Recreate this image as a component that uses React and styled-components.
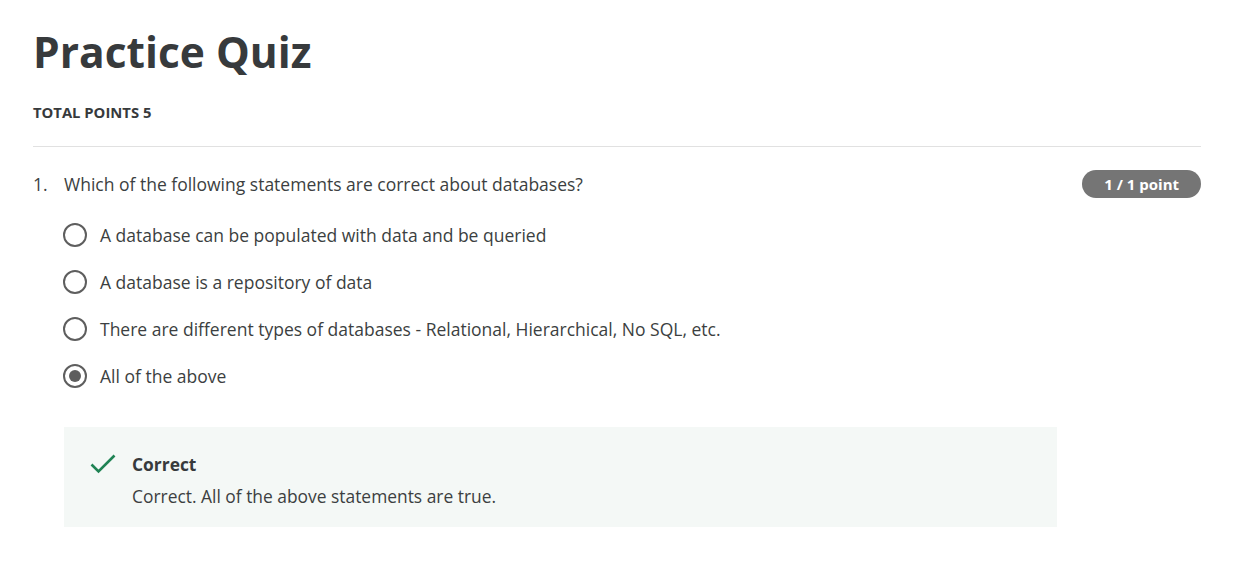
import React from "react";
import styled, { createGlobalStyle } from "styled-components";

const GlobalStyle = createGlobalStyle`
  body {
    margin: 0;
    background: #fff;
    font-family: "Open Sans", "Liberation Sans", sans-serif;
    color: #3c3f41;
  }
`;

const options = [
  "A database can be populated with data and be queried",
  "A database is a repository of data",
  "There are different types of databases - Relational, Hierarchical, No SQL, etc.",
  "All of the above",
];

function App() {
  const selected = 3;
  return (
    <>
      <GlobalStyle />
      <Page>
        <Title>Practice Quiz</Title>
        <TotalPoints>TOTAL POINTS 5</TotalPoints>
        <Divider />
        <Question>
          <QuestionHead>
            <Number>1.</Number>
            <Prompt>Which of the following statements are correct about databases?</Prompt>
            <Badge>1 / 1 point</Badge>
          </QuestionHead>
          <Options>
            {options.map((text, i) => (
              <Option key={i}>
                <Radio checked={i === selected} />
                <span>{text}</span>
              </Option>
            ))}
          </Options>
          <Feedback>
            <CheckIcon viewBox="0 0 26 20">
              <path d="M1.5 10.5 L8.5 17.5 L24.5 1.5" fill="none" stroke="#1f8354" strokeWidth="2.6" />
            </CheckIcon>
            <div>
              <FeedbackTitle>Correct</FeedbackTitle>
              <FeedbackText>Correct. All of the above statements are true.</FeedbackText>
            </div>
          </Feedback>
        </Question>
      </Page>
    </>
  );
}

const Page = styled.div`
  padding: 22px 32px 40px 33px;
`;

const Title = styled.h1`
  margin: 0;
  font-size: 42.5px;
  font-weight: 700;
  line-height: 60px;
  color: #373a3c;
`;

const TotalPoints = styled.div`
  margin-top: 20px;
  font-size: 14.8px;
  font-weight: 700;
  line-height: 20px;
  color: #373a3c;
`;

const Divider = styled.hr`
  margin: 24px 0 0;
  border: none;
  border-top: 1px solid #e1e1e1;
`;

const Question = styled.div`
  padding-top: 23px;
`;

const QuestionHead = styled.div`
  display: flex;
  align-items: center;
  height: 28px;
  font-size: 17.5px;
  line-height: 26px;
`;

const Number = styled.span`
  width: 31px;
  flex-shrink: 0;
`;

const Prompt = styled.span`
  flex: 1;
`;

const Badge = styled.span`
  background: #757575;
  color: #fff;
  font-size: 15px;
  font-weight: 700;
  height: 28px;
  line-height: 28px;
  border-radius: 14px;
  padding: 0 22px;
`;

const Options = styled.div`
  margin-top: 25px;
  padding-left: 30px;
  display: flex;
  flex-direction: column;
  gap: 23px;
`;

const Option = styled.label`
  display: flex;
  align-items: center;
  height: 24px;
  gap: 13px;
  font-size: 17.5px;
  line-height: 24px;
`;

const Radio = styled.span`
  width: 24px;
  height: 24px;
  box-sizing: border-box;
  border-radius: 50%;
  border: 2px solid #5e5e5e;
  flex-shrink: 0;
  position: relative;
  &::after {
    content: "";
    display: ${(p) => (p.checked ? "block" : "none")};
    position: absolute;
    left: 4px;
    top: 4px;
    width: 12px;
    height: 12px;
    border-radius: 50%;
    background: #5e5e5e;
  }
`;

const Feedback = styled.div`
  margin: 39px 0 0 31px;
  width: 993px;
  box-sizing: border-box;
  background: #f4f8f6;
  padding: 25px 26px 19px 26px;
  display: flex;
  gap: 16px;
  align-items: flex-start;
`;

const CheckIcon = styled.svg`
  width: 26px;
  height: 20px;
  margin-top: 2px;
  flex-shrink: 0;
`;

const FeedbackTitle = styled.div`
  font-size: 17.4px;
  font-weight: 700;
  line-height: 24px;
  color: #373a3c;
`;

const FeedbackText = styled.div`
  font-size: 17.4px;
  line-height: 24px;
  margin-top: 8px;
`;

export default App;
